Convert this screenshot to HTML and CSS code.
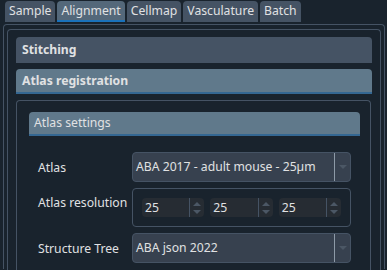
FILE: index.html
```html
<!DOCTYPE html>
<html>
  <head>
    <title>Alignment</title>
    <link rel="stylesheet" href="styles.css">
  </head>
  <body>
    <div class="tabs">
      <div class="tab">Sample</div>
      <div class="tab selected">Alignment</div>
      <div class="tab">Cellmap</div>
      <div class="tab">Vasculature</div>
      <div class="tab">Batch</div>
    </div>
    <div class="pane">
      <div class="scroll">
        <div class="section-head">Stitching</div>
        <div class="section-head open">Atlas registration</div>
        <div class="section-body">
          <div class="group-head">Atlas settings</div>
          <div class="form">
            <label>Atlas</label>
            <div class="combo">
              <span class="combo-text">ABA 2017 - adult mouse - 25µm</span>
              <span class="combo-arrow"><svg width="8" height="5" viewBox="0 0 8 5"><path d="M0 0h8L4 4z" fill="#4b5765"/></svg></span>
            </div>
            <label class="raised">Atlas resolution</label>
            <div class="triple">
              <div class="spin"><span>25</span><span class="spin-btns"><svg width="8" height="14" viewBox="0 0 8 14"><path d="M0 5L4 1l4 4z M0 9l4 4 4-4z" fill="#4b5765"/></svg></span></div>
              <div class="spin"><span>25</span><span class="spin-btns"><svg width="8" height="14" viewBox="0 0 8 14"><path d="M0 5L4 1l4 4z M0 9l4 4 4-4z" fill="#4b5765"/></svg></span></div>
              <div class="spin"><span>25</span><span class="spin-btns"><svg width="8" height="14" viewBox="0 0 8 14"><path d="M0 5L4 1l4 4z M0 9l4 4 4-4z" fill="#4b5765"/></svg></span></div>
            </div>
            <label>Structure Tree</label>
            <div class="combo">
              <span class="combo-text">ABA json 2022</span>
              <span class="combo-arrow"><svg width="8" height="5" viewBox="0 0 8 5"><path d="M0 0h8L4 4z" fill="#4b5765"/></svg></span>
            </div>
          </div>
        </div>
      </div>
    </div>
  </body>
</html>
```

FILE: styles.css
```css
body {
  margin: 0;
  background-color: #19232d;
  color: #e0e1e3;
  font-family: "Noto Sans", sans-serif;
  font-size: 12.2px;
  height: 270px;
  overflow: hidden;
}

.tabs {
  display: flex;
  gap: 2px;
  padding: 1px 0 0 5px;
}
.tab {
  height: 19px;
  line-height: 19px;
  padding: 0 4px;
  background-color: #455364;
  border-radius: 4px 4px 0 0;
  border-bottom: 2px solid #455364;
}
.tab.selected {
  background-color: #54687a;
  border-bottom-color: #1a72bb;
}

.pane {
  margin: 2px 2px 0 3px;
  border: 1px solid #455364;
  border-bottom: none;
  border-radius: 4px 4px 0 0;
  padding: 4px 3px 0 3px;
  height: 240px;
}
.scroll {
  border: 1px solid #455364;
  border-bottom: none;
  border-radius: 4px 4px 0 0;
  padding: 7px 8px 0 8px;
  height: 235px;
}

.section-head {
  height: 26px;
  line-height: 25px;
  padding-left: 6px;
  font-weight: bold;
  background-color: #455364;
  border-radius: 4px 4px 0 0;
  margin-bottom: 6px;
}
.section-head.open {
  height: 23px;
  line-height: 23px;
  background-color: #60798b;
  border-bottom: 2px solid #346792;
}

.section-body {
  border: 1px solid #455364;
  border-bottom: none;
  border-radius: 4px 4px 0 0;
  margin-right: 1px;
  padding: 11px 10px 0 12px;
  height: 165px;
}

.group-head {
  height: 22px;
  line-height: 22px;
  padding-left: 5px;
  background-color: #60798b;
  border-radius: 4px 4px 0 0;
  border-bottom: 2px solid #346792;
  margin-bottom: 16px;
}

.form {
  display: grid;
  grid-template-columns: 94px 219px;
  row-gap: 6px;
  align-items: center;
  padding-left: 9px;
}
.form label {
  white-space: nowrap;
}
.form label.raised {
  margin-bottom: 10px;
}

.combo {
  display: flex;
  height: 28px;
  background-color: #37414f;
  border: 1px solid #455364;
  border-radius: 4px;
}
.combo-text {
  flex: 1;
  line-height: 28px;
  padding-left: 3px;
}
.combo-arrow {
  width: 15px;
  border-left: 1px solid #8d9aa7;
  display: flex;
  align-items: center;
  justify-content: center;
}

.triple {
  display: flex;
  gap: 6px;
  height: 37px;
  align-items: center;
  border: 1px solid #455364;
  border-radius: 4px;
  padding: 0 9px;
}
.spin {
  flex: 1;
  display: flex;
  height: 19px;
  background-color: #262c33;
  border-radius: 4px;
}
.spin span:first-child {
  flex: 1;
  line-height: 19px;
  padding-left: 3px;
}
.spin-btns {
  width: 14px;
  border-left: 1px solid #455364;
  display: flex;
  align-items: center;
  justify-content: center;
}
```
